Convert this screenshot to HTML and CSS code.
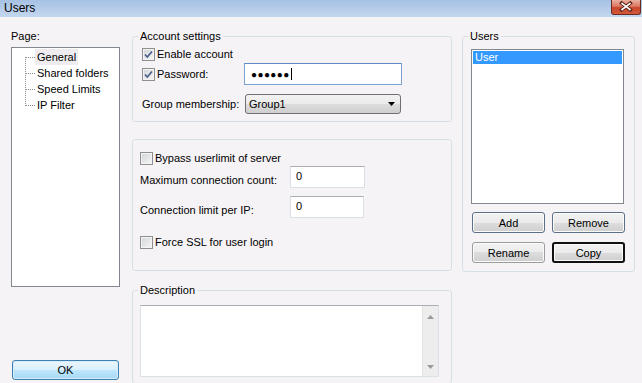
FILE: index.html
```html
<!DOCTYPE html>
<html lang="en">
<head>
    <meta charset="UTF-8">
    <meta name="viewport" content="width=device-width, initial-scale=1.0">
    <title>Users</title>
    <link rel="stylesheet" href="styles.css">
</head>
<body>
    <div class="titlebar">
        <span class="title">Users</span>
        <span class="close-btn">
            <svg width="29" height="14" viewBox="0 0 29 14">
                <path d="M10 3 L19 10 M19 3 L10 10" stroke="#5a2418" stroke-width="3.6" stroke-linecap="square"/>
                <path d="M10.5 3.5 L18.5 9.5 M18.5 3.5 L10.5 9.5" stroke="#ffffff" stroke-width="1.8" stroke-linecap="square"/>
            </svg>
        </span>
    </div>

    <div class="dialog">
        <div class="page-col">
            <div class="page-label">Page:</div>
            <ul class="tree">
                <li><span class="branch first"></span><span class="node selected">General</span></li>
                <li><span class="branch"></span><span class="node">Shared folders</span></li>
                <li><span class="branch"></span><span class="node">Speed Limits</span></li>
                <li><span class="branch last"></span><span class="node">IP Filter</span></li>
            </ul>
            <button class="btn btn-ok">OK</button>
        </div>

        <div class="settings-col">
            <fieldset class="group account-group">
                <legend>Account settings</legend>
                <div class="row check-row">
                    <span class="checkbox checked"><svg width="11" height="11" viewBox="0 0 11 11"><path d="M2 5.5 L4.3 8 L9 2.5" fill="none" stroke="#4b5f8e" stroke-width="1.7"/></svg></span>
                    Enable account
                </div>
                <div class="row password-row">
                    <span class="check-label">
                        <span class="checkbox checked"><svg width="11" height="11" viewBox="0 0 11 11"><path d="M2 5.5 L4.3 8 L9 2.5" fill="none" stroke="#4b5f8e" stroke-width="1.7"/></svg></span>
                        Password:
                    </span>
                    <div class="textbox focused">●●●●●●<span class="caret"></span></div>
                </div>
                <div class="row group-row">
                    <span class="field-label">Group membership:</span>
                    <div class="combo">
                        <span>Group1</span>
                        <svg width="7" height="4" viewBox="0 0 7 4"><polygon points="0,0 7,0 3.5,4" fill="#000"/></svg>
                    </div>
                </div>
            </fieldset>

            <fieldset class="group limits-group">
                <div class="row check-row">
                    <span class="checkbox"></span>
                    Bypass userlimit of server
                </div>
                <div class="row input-row">
                    <span class="limit-label">Maximum connection count:</span>
                    <div class="textbox number">0</div>
                </div>
                <div class="row input-row second">
                    <span class="limit-label">Connection limit per IP:</span>
                    <div class="textbox number narrow">0</div>
                </div>
                <div class="row check-row ssl-row">
                    <span class="checkbox"></span>
                    Force SSL for user login
                </div>
            </fieldset>

            <fieldset class="group desc-group">
                <legend>Description</legend>
                <div class="memo">
                    <div class="memo-text"></div>
                    <div class="scrollbar">
                        <svg width="7" height="4" viewBox="0 0 7 4"><polygon points="3.5,0 7,4 0,4" fill="#9a9a9a"/></svg>
                        <svg width="7" height="4" viewBox="0 0 7 4"><polygon points="0,0 7,0 3.5,4" fill="#9a9a9a"/></svg>
                    </div>
                </div>
            </fieldset>
        </div>

        <div class="users-col">
            <fieldset class="group users-group">
                <legend>Users</legend>
                <div class="listbox">
                    <div class="list-item selected">User</div>
                </div>
                <div class="user-buttons">
                    <button class="btn btn-blue">Add</button>
                    <button class="btn btn-blue">Remove</button>
                    <button class="btn btn-light">Rename</button>
                    <button class="btn btn-default">Copy</button>
                </div>
            </fieldset>
        </div>
    </div>
</body>
</html>
```

FILE: styles.css
```css
* {
    margin: 0;
    padding: 0;
    box-sizing: border-box;
    font-family: "Liberation Sans", Arial, sans-serif;
}

body {
    width: 642px;
    height: 383px;
    overflow: hidden;
    background-color: #f6f3f6;
    font-size: 11px;
    line-height: 13px;
    color: #000;
}

/* title bar */

.titlebar {
    height: 17px;
    display: flex;
    justify-content: space-between;
    align-items: flex-start;
    background: linear-gradient(#a6c1e3, #c3d7ef);
}

.title {
    font-size: 12px;
    line-height: 15px;
    padding-left: 4px;
    padding-top: 1px;
}

.close-btn {
    width: 30px;
    height: 15px;
    margin-right: 1px;
    border: 1px solid #6b2a1f;
    border-top: none;
    border-radius: 0 0 3px 3px;
    background: linear-gradient(#eab0a2 0%, #dc7860 45%, #c8452c 55%, #d2593c 100%);
    display: flex;
}

/* layout */

.dialog {
    display: flex;
    padding: 13px 0 0 11px;
}

.page-col {
    width: 109px;
    margin-right: 12px;
    display: flex;
    flex-direction: column;
}

.settings-col {
    width: 320px;
    margin-right: 10px;
}

.users-col {
    width: 173px;
}

/* page tree */

.page-label {
    height: 13px;
    margin-bottom: 4px;
}

.tree {
    list-style: none;
    height: 240px;
    border: 1px solid #828790;
    background: white;
    padding-top: 1px;
}

.tree li {
    display: flex;
    height: 16px;
    line-height: 16px;
}

.branch {
    width: 10px;
    margin-left: 13px;
    flex: none;
    background:
        repeating-linear-gradient(to right, #8a8a8a 0 1px, transparent 1px 2px) 1px 8px / 9px 1px no-repeat,
        repeating-linear-gradient(to bottom, #8a8a8a 0 1px, transparent 1px 2px) 0 0 / 1px 100% no-repeat;
}

.branch.first {
    background:
        repeating-linear-gradient(to right, #8a8a8a 0 1px, transparent 1px 2px) 1px 8px / 9px 1px no-repeat,
        repeating-linear-gradient(to bottom, #8a8a8a 0 1px, transparent 1px 2px) 0 8px / 1px 8px no-repeat;
}

.branch.last {
    background:
        repeating-linear-gradient(to right, #8a8a8a 0 1px, transparent 1px 2px) 1px 8px / 9px 1px no-repeat,
        repeating-linear-gradient(to bottom, #8a8a8a 0 1px, transparent 1px 2px) 0 0 / 1px 9px no-repeat;
}

.node {
    padding: 0 2px;
}

.node.selected {
    background: #efecef;
}

/* buttons */

.btn {
    font-size: 11px;
    color: #000;
    border: 1px solid #707070;
    border-radius: 3px;
    background: linear-gradient(#f2f2f2 0%, #ebebeb 50%, #dddddd 50%, #cfcfcf 100%);
    box-shadow: inset 0 0 0 1px #fbfbfb;
}

.btn-ok {
    width: 107px;
    height: 20px;
    margin-top: 73px;
    margin-left: 1px;
    border-color: #3c7fb1;
    background: linear-gradient(#eaf6fd 0%, #d9f0fc 50%, #bee6fd 50%, #a7d9f5 100%);
    box-shadow: inset 0 0 0 1px #d6eefb;
}

.btn-blue {
    border-color: #5b6f86;
}

.btn-light {
    border-color: #9c9c9c;
}

.btn-default {
    border: 2px solid #111;
}

/* group boxes */

.group {
    width: 100%;
    border: 1px solid #d5dfe5;
    border-radius: 3px;
}

.group legend {
    padding: 0 2px;
    line-height: 13px;
}

.row {
    display: flex;
    align-items: center;
}

.checkbox {
    width: 13px;
    height: 13px;
    flex: none;
    margin-right: 2px;
    border: 1px solid #8f8f8f;
    background: linear-gradient(135deg, #d3d5d8, #f6f6f6);
    box-shadow: inset 0 0 0 1px #f4f4f4;
    display: flex;
    align-items: center;
    justify-content: center;
}

.textbox {
    height: 22px;
    background: white;
    border: 1px solid #dbdfe6;
    border-top-color: #abadb3;
    padding: 3px 5px 0;
}

.textbox.focused {
    border-color: #7ca3cf;
    border-top-color: #5d8dc4;
}

/* account settings */

.account-group {
    padding: 3px 0 7px 9px;
}

.account-group legend {
    margin-left: -4px;
}

.check-row {
    height: 16px;
}

.password-row {
    height: 22px;
    margin-top: 1px;
}

.check-label {
    width: 102px;
    display: flex;
    align-items: center;
}

.password-row .textbox {
    width: 158px;
    display: flex;
    align-items: center;
    padding: 0 0 0 6px;
    font-size: 10px;
    letter-spacing: 0.4px;
}

.caret {
    width: 1px;
    height: 12px;
    margin-left: 1px;
    background: #000;
}

.group-row {
    height: 20px;
    margin-top: 9px;
}

.field-label {
    width: 103px;
}

.combo {
    width: 156px;
    height: 20px;
    display: flex;
    align-items: center;
    justify-content: space-between;
    padding: 0 5px 0 3px;
    border: 1px solid #707070;
    border-radius: 3px;
    background: linear-gradient(#f2f2f2 0%, #ebebeb 50%, #dddddd 50%, #cfcfcf 100%);
}

/* connection limits */

.limits-group {
    margin-top: 17px;
    padding: 10px 0 20px 7px;
}

.input-row {
    height: 22px;
    align-items: flex-start;
}

.input-row.second {
    margin-top: 8px;
}

.limit-label {
    width: 150px;
    margin-top: 8px;
}

.textbox.number {
    width: 75px;
}

.textbox.number.narrow {
    width: 74px;
}

.ssl-row {
    margin-top: 16px;
}

/* description */

.desc-group {
    margin-top: 13px;
    height: 100px;
    padding: 8px 0 0 7px;
}

.desc-group legend {
    margin-left: -2px;
}

.memo {
    width: 299px;
    height: 72px;
    display: flex;
    justify-content: flex-end;
    background: white;
    border: 1px solid #dbdfe6;
    border-top-color: #abadb3;
}

.scrollbar {
    width: 16px;
    background: #ededed;
    border-left: 1px solid #e4e4e4;
    display: flex;
    flex-direction: column;
    justify-content: space-between;
    align-items: center;
    padding: 9px 0 7px;
}

/* users */

.users-group {
    padding: 6px 0 8px 8px;
}

.users-group legend {
    margin-left: -3px;
}

.listbox {
    width: 153px;
    height: 155px;
    border: 1px solid #828790;
    background: white;
    padding: 1px;
}

.list-item.selected {
    background: #3399ff;
    color: white;
    padding-left: 2px;
}

.user-buttons {
    display: grid;
    grid-template-columns: 73px 73px;
    grid-template-rows: 21px 21px;
    column-gap: 7px;
    row-gap: 9px;
    margin-top: 8px;
    margin-left: 1px;
}
```
